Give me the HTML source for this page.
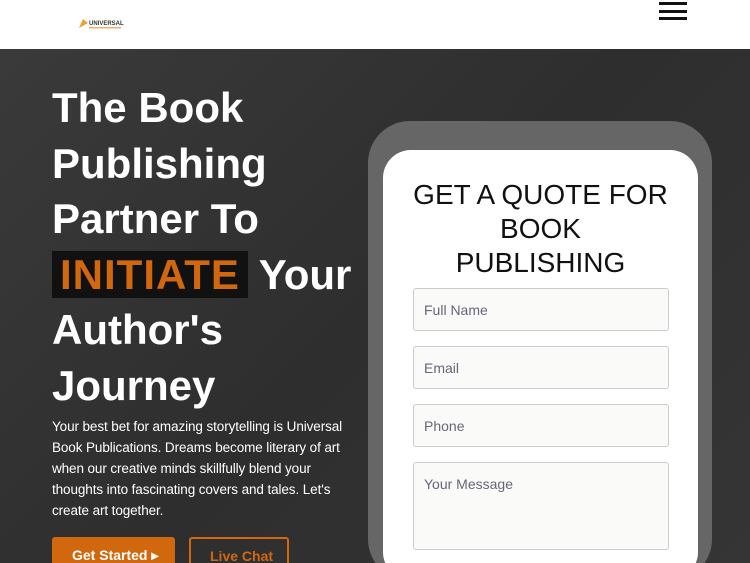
<!DOCTYPE html>
<html style="width:750px;height:563px;overflow:hidden"><head><style>
*{margin:0;padding:0;box-sizing:border-box}
body{width:750px;height:563px;overflow:hidden;position:relative;font-family:"Liberation Sans",sans-serif;background:#333}
.hdr{position:absolute;left:0;top:0;width:750px;height:49px;background:#fff}
.hero{position:absolute;top:49px;left:0;width:750px;height:514px;background:linear-gradient(135deg,#3a3a3a,#2e2e2e 50%,#353535)}
h1{position:absolute;left:52px;top:80px;color:#fff;font-size:42px;line-height:55.5px;font-weight:bold;width:320px}
.hl{background:#111;color:#d2680e;padding:0 8px;letter-spacing:1px}
p.t{position:absolute;left:52px;top:416px;width:310px;color:#fff;font-size:13.5px;line-height:21px;letter-spacing:-0.1px}
.b1{position:absolute;left:52px;top:537px;width:123px;height:36px;background:#d2680e;border-radius:3px;color:#fff;font-weight:bold;font-size:14px;padding:10px 0 0 20px}
.b2{position:absolute;left:189px;top:537px;width:100px;height:36px;border:2px solid #d2680e;border-radius:3px;color:#d2680e;font-weight:bold;font-size:14px;padding:9px 0 0 19px}
.frame{position:absolute;left:368px;top:121px;width:344px;height:460px;background:#666;border-radius:42px}
.card{position:absolute;left:383px;top:150px;width:315px;height:430px;background:#fff;border-radius:28px}
.card h2{font-weight:normal;font-size:28px;line-height:34px;text-align:center;margin-top:28px;color:#111}
.in{position:absolute;left:30px;width:256px;height:43px;border:1px solid #ccc;border-radius:3px;background:#fafaf8;color:#667;font-size:14px;padding:13px 10px}
</style></head><body>
<div class="hdr">
<svg style="position:absolute;left:77px;top:16px" width="50" height="16"><path d="M2 12 L6 3 L11 7 Z" fill="#f0a030"/><text x="12" y="9" font-size="6" font-weight="bold" font-family="Liberation Sans" fill="#333">UNIVERSAL</text><rect x="12" y="11" width="32" height="1.5" fill="#e9b070"/></svg>
<div style="position:absolute;left:659px;top:2px;width:28px;height:3px;background:#111"></div>
<div style="position:absolute;left:659px;top:10px;width:28px;height:3px;background:#111"></div>
<div style="position:absolute;left:659px;top:17px;width:28px;height:3px;background:#111"></div>
</div>
<div class="hero"></div>
<h1>The Book Publishing Partner To <span class="hl">INITIATE</span> Your Author's Journey</h1>
<p class="t">Your best bet for amazing storytelling is Universal Book Publications. Dreams become literary of art when our creative minds skillfully blend your thoughts into fascinating covers and tales. Let's create art together.</p>
<div class="b1">Get Started ▸</div>
<div class="b2">Live Chat</div>
<div class="frame"></div>
<div class="card"><h2>GET A QUOTE FOR<br>BOOK<br>PUBLISHING</h2>
<div class="in" style="top:138px">Full Name</div>
<div class="in" style="top:196px">Email</div>
<div class="in" style="top:254px">Phone</div>
<div class="in" style="top:312px;height:88px">Your Message</div>
</div>
</body></html>
